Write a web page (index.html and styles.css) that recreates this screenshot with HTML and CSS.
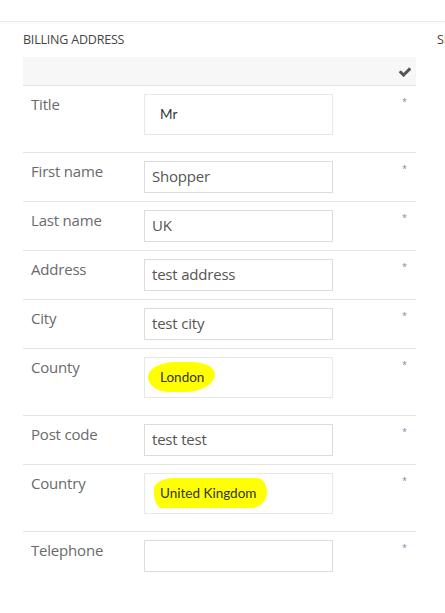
FILE: index.html
```html
<!DOCTYPE html>
<html>
<head>
<meta charset="utf-8">
<link rel="stylesheet" href="styles.css">
</head>
<body>
<div class="topbar"></div>
<div class="columns">
  <section class="billing">
    <h2 class="heading">BILLING ADDRESS</h2>
    <div class="toolbar">
      <svg class="check" viewBox="0 0 1792 1792" width="14" height="14"><path fill="#555" d="M1671 566q0 40-28 68l-724 724-136 136q-28 28-68 28t-68-28l-136-136-362-362q-28-28-28-68t28-68l136-136q28-28 68-28t68 28l294 295 656-657q28-28 68-28t68 28l136 136q28 28 28 68z"/></svg>
    </div>
    <div class="row tall">
      <div class="label">Title</div>
      <div class="select">Mr</div>
      <div class="req">*</div>
    </div>
    <div class="row">
      <div class="label">First name</div>
      <div class="input">Shopper</div>
      <div class="req">*</div>
    </div>
    <div class="row">
      <div class="label">Last name</div>
      <div class="input">UK</div>
      <div class="req">*</div>
    </div>
    <div class="row">
      <div class="label">Address</div>
      <div class="input">test address</div>
      <div class="req">*</div>
    </div>
    <div class="row">
      <div class="label">City</div>
      <div class="input">test city</div>
      <div class="req">*</div>
    </div>
    <div class="row tall">
      <div class="label">County</div>
      <div class="select"><span class="mark mark-a">London</span></div>
      <div class="req">*</div>
    </div>
    <div class="row">
      <div class="label">Post code</div>
      <div class="input">test test</div>
      <div class="req">*</div>
    </div>
    <div class="row tall">
      <div class="label">Country</div>
      <div class="select"><span class="mark mark-b">United Kingdom</span></div>
      <div class="req">*</div>
    </div>
    <div class="row">
      <div class="label">Telephone</div>
      <div class="input"></div>
      <div class="req">*</div>
    </div>
  </section>
  <section class="shipping">
    <h2 class="heading">SHIPPING ADDRESS</h2>
  </section>
</div>
</body>
</html>
```
FILE: styles.css
```css
html, body {
  margin: 0;
  padding: 0;
  background: #fff;
  overflow: hidden;
}
body {
  font-family: "Open Sans", "Liberation Sans", sans-serif;
  color: #666;
  width: 445px;
  height: 613px;
}
.topbar {
  height: 21px;
  border-bottom: 1px solid #ececec;
  box-shadow: 0 1px 2px rgba(0,0,0,0.04);
}
.columns {
  display: flex;
  gap: 21px;
  padding-left: 23px;
}
.billing {
  width: 393px;
  flex: none;
}
.shipping {
  flex: none;
  width: 300px;
}
.heading {
  margin: 0;
  height: 35px;
  padding-top: 11px;
  box-sizing: border-box;
  font-size: 12.5px;
  font-weight: 400;
  color: #444;
  letter-spacing: -0.2px;
  line-height: 14px;
}
.toolbar {
  height: 28px;
  background: #f7f7f7;
  display: flex;
  justify-content: flex-end;
  align-items: center;
  padding-right: 4px;
}
.check {
  display: block;
  margin-top: 2px;
}
.row {
  border-top: 1px solid #e4e4e4;
  display: grid;
  grid-template-columns: 121px 189px 1fr;
  padding: 8px 0 8px 0;
  align-items: start;
}
.row.tall {
  padding-bottom: 17px;
}
.label {
  padding-left: 8px;
  font-size: 15px;
  color: #6a6a6a;
  line-height: 20px;
  letter-spacing: -0.2px;
}
.input {
  height: 32px;
  border: 1px solid #dcdcdc;
  box-sizing: border-box;
  padding: 0 7px;
  font-size: 15px;
  color: #555;
  line-height: 29px;
  letter-spacing: -0.2px;
}
.select {
  height: 41px;
  border: 1px solid #e8e8e8;
  box-sizing: border-box;
  padding: 0 15px;
  font-family: Lato, "Liberation Sans", sans-serif;
  font-size: 13.5px;
  color: #333;
  line-height: 39px;
  position: relative;
}
.req {
  text-align: right;
  padding-right: 9px;
  font-size: 9px;
  color: #7a88a8;
  line-height: 10px;
  padding-top: 3px;
}
.mark {
  display: inline-block;
  background: #ffff00;
  line-height: 18px;
  padding: 6px 10px 6px 12px;
  margin-left: -12px;
  border-radius: 40% 35% 45% 30% / 50% 40% 60% 50%;
}
.mark-a {
  padding-right: 11px;
  margin-top: 3px;
}
.mark-b {
  margin-left: -6px;
  padding-left: 6px;
  padding-right: 11px;
  border-radius: 20% 10% 15% 8% / 40% 50% 60% 50%;
}
```
